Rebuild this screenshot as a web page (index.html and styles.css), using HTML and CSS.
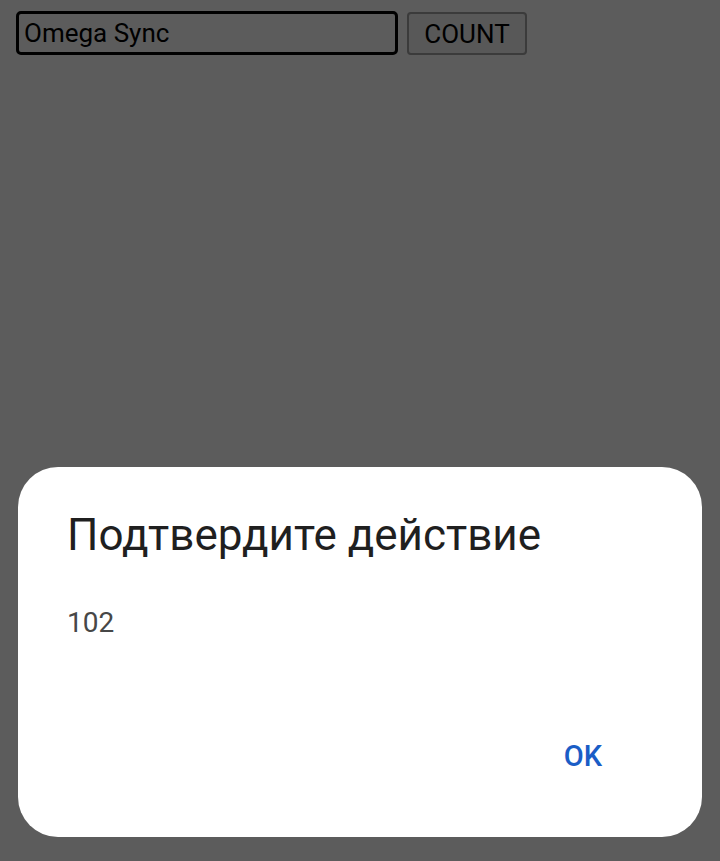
FILE: index.html
```html
<!DOCTYPE html>
<html lang="ru">
<head>
<meta charset="utf-8">
<title>Omega Sync</title>
<link rel="stylesheet" href="styles.css">
</head>
<body>
<div class="toolbar">
  <input class="field" type="text" value="Omega Sync">
  <button class="count-btn" type="button">COUNT</button>
</div>
<div class="scrim">
  <div class="dialog" role="dialog">
    <div class="dialog-title">Подтвердите действие</div>
    <div class="dialog-message">102</div>
    <div class="dialog-actions">
      <button class="dialog-btn" type="button">OK</button>
    </div>
  </div>
</div>
</body>
</html>
```
FILE: styles.css
```css
html, body {
  margin: 0;
  padding: 0;
  height: 100%;
}
body {
  background: #5c5c5c;
  font-family: Roboto, "Noto Sans", sans-serif;
  overflow: hidden;
}
.toolbar {
  display: flex;
  align-items: flex-start;
  gap: 9px;
  padding: 11px 16px 0 16px;
}
.field {
  box-sizing: border-box;
  width: 382px;
  height: 44px;
  margin: 0;
  border: 3px solid #000;
  border-radius: 5px;
  background: transparent;
  color: #000;
  font-family: Roboto, sans-serif;
  font-size: 26px;
  padding: 0 0 0 5px;
  outline: none;
}
.count-btn {
  box-sizing: border-box;
  width: 120px;
  height: 43px;
  margin: 1px 0 0 0;
  border: 2px solid #3b3b3b;
  border-radius: 4px;
  background: #585858;
  color: #000;
  font-family: Roboto, sans-serif;
  font-size: 26px;
  padding: 0;
}
.scrim {
  position: fixed;
  left: 0;
  right: 0;
  top: 0;
  bottom: 0;
}
.dialog {
  position: absolute;
  left: 18px;
  top: 467px;
  width: 684px;
  height: 370px;
  box-sizing: border-box;
  background: #fff;
  border-radius: 40px;
  padding: 42px 49px 0 49px;
}
.dialog-title {
  font-size: 44px;
  line-height: 52px;
  color: #1f1f1f;
}
.dialog-message {
  margin-top: 44px;
  font-size: 28px;
  line-height: 36px;
  color: #474747;
}
.dialog-actions {
  display: flex;
  justify-content: flex-end;
  margin-top: 97px;
  padding-right: 51px;
}
.dialog-btn {
  border: none;
  background: none;
  padding: 0;
  font-family: Roboto, sans-serif;
  font-size: 29px;
  line-height: 36px;
  font-weight: 500;
  color: #1a5dc6;
}
```
